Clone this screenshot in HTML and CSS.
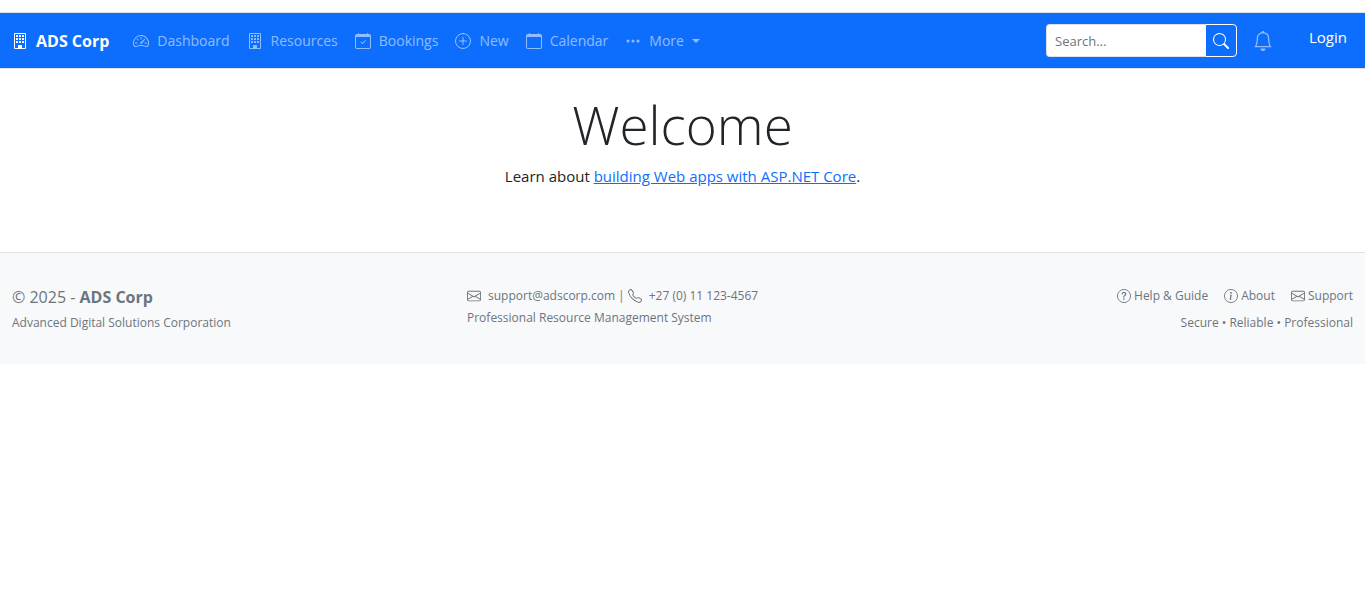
FILE: index.html
```html
<!DOCTYPE html>
<html lang="en">
<head>
<meta charset="utf-8">
<meta name="viewport" content="width=device-width, initial-scale=1">
<title>Home - ADS Corp</title>
<link rel="stylesheet" href="styles.css">
</head>
<body>
<svg class="sprite" aria-hidden="true">
  <symbol id="building" viewBox="0 0 16 16"><path d="M4 2.500a.5.5 0 0 1 .5-.5h1a.5.5 0 0 1 .5.5v1a.5.5 0 0 1-.5.5h-1a.5.5 0 0 1-.5-.5zm3 0a.5.5 0 0 1 .5-.5h1a.5.5 0 0 1 .5.5v1a.5.5 0 0 1-.5.5h-1a.5.5 0 0 1-.5-.5zm3 0a.5.5 0 0 1 .5-.5h1a.5.5 0 0 1 .5.5v1a.5.5 0 0 1-.5.5h-1a.5.5 0 0 1-.5-.5zm-6 3a.5.5 0 0 1 .5-.5h1a.5.5 0 0 1 .5.5v1a.5.5 0 0 1-.5.5h-1a.5.5 0 0 1-.5-.5zm3 0a.5.5 0 0 1 .5-.5h1a.5.5 0 0 1 .5.5v1a.5.5 0 0 1-.5.5h-1a.5.5 0 0 1-.5-.5zm3 0a.5.5 0 0 1 .5-.5h1a.5.5 0 0 1 .5.5v1a.5.5 0 0 1-.5.5h-1a.5.5 0 0 1-.5-.5zm-6 3a.5.5 0 0 1 .5-.5h1a.5.5 0 0 1 .5.5v1a.5.5 0 0 1-.5.5h-1a.5.5 0 0 1-.5-.5zm3 0a.5.5 0 0 1 .5-.5h1a.5.5 0 0 1 .5.5v1a.5.5 0 0 1-.5.5h-1a.5.5 0 0 1-.5-.5zm3 0a.5.5 0 0 1 .5-.5h1a.5.5 0 0 1 .5.5v1a.5.5 0 0 1-.5.5h-1a.5.5 0 0 1-.5-.5z"/><path fill-rule="evenodd" d="M2 1a1 1 0 0 1 1-1h10a1 1 0 0 1 1 1v14a1 1 0 0 1-1 1H3a1 1 0 0 1-1-1zm11 0H3v14h3v-2.500a.5.5 0 0 1 .5-.5h3a.5.5 0 0 1 .5.5V15h3z"/></symbol>
  <symbol id="speed" viewBox="0 0 16 16"><path d="M8 4a.5.5 0 0 1 .5.5V6a.5.5 0 0 1-1 0V4.5A.5.5 0 0 1 8 4M3.732 5.732a.5.5 0 0 1 .707 0l.915.914a.5.5 0 1 1-.708.708l-.914-.915a.5.5 0 0 1 0-.707M2 10a.5.5 0 0 1 .5-.5h1.586a.5.5 0 0 1 0 1H2.5A.5.5 0 0 1 2 10m9.5 0a.5.5 0 0 1 .5-.5h1.5a.5.5 0 0 1 0 1H12a.5.5 0 0 1-.5-.5m.754-4.246a.39.39 0 0 0-.527-.02L7.547 9.31a.91.91 0 1 0 1.302 1.258l3.434-4.297a.39.39 0 0 0-.029-.518z"/><path fill-rule="evenodd" d="M0 10a8 8 0 1 1 15.547 2.661c-.442 1.253-1.845 1.602-2.932 1.25C11.309 13.488 9.475 13 8 13c-1.474 0-3.31.488-4.615.911-1.087.352-2.49.003-2.932-1.25A8 8 0 0 1 0 10m8-7a7 7 0 0 0-6.603 9.329c.203.575.923.876 1.68.63C4.397 12.533 6.358 12 8 12s3.604.532 4.923.96c.757.245 1.477-.056 1.68-.631A7 7 0 0 0 8 3"/></symbol>
  <symbol id="calendar" viewBox="0 0 16 16"><path d="M3.5 0a.5.5 0 0 1 .5.5V1h8V.5a.5.5 0 0 1 1 0V1h1a2 2 0 0 1 2 2v11a2 2 0 0 1-2 2H2a2 2 0 0 1-2-2V3a2 2 0 0 1 2-2h1V.5a.5.5 0 0 1 .5-.5M1 4v10a1 1 0 0 0 1 1h12a1 1 0 0 0 1-1V4z"/></symbol>
  <symbol id="calendar-check" viewBox="0 0 16 16"><use href="#calendar"/><path d="M10.854 7.146a.5.5 0 0 1 0 .708l-3 3a.5.5 0 0 1-.708 0l-1.5-1.5a.5.5 0 1 1 .708-.708L7.5 9.793l2.646-2.647a.5.5 0 0 1 .708 0"/></symbol>
  <symbol id="plus" viewBox="0 0 16 16"><path fill="none" stroke="currentColor" stroke-linecap="round" d="M8 4.500v7M4.500 8h7M8 .5a7.500 7.500 0 1 0 0 15a7.500 7.500 0 1 0 0-15"/></symbol>
  <symbol id="dots" viewBox="0 0 16 16"><circle cx="3" cy="8" r="1.500"/><circle cx="8" cy="8" r="1.500"/><circle cx="13" cy="8" r="1.500"/></symbol>
  <symbol id="search" viewBox="0 0 16 16"><path d="M11.742 10.344a6.5 6.5 0 1 0-1.397 1.398h-.001q.044.06.098.115l3.85 3.85a1 1 0 0 0 1.415-1.414l-3.85-3.85a1 1 0 0 0-.115-.1zM12 6.5a5.5 5.5 0 1 1-11 0 5.5 5.5 0 0 1 11 0"/></symbol>
  <symbol id="bell" viewBox="0 0 16 16"><path d="M8 16a2 2 0 0 0 2-2H6a2 2 0 0 0 2 2M8 1.918l-.797.161A4 4 0 0 0 4 6c0 .628-.134 2.197-.459 3.742-.16.767-.376 1.566-.663 2.258h10.244c-.287-.692-.502-1.49-.663-2.258C12.134 8.197 12 6.628 12 6a4 4 0 0 0-3.203-3.92zM14.22 12c.223.447.481.801.78 1H1c.299-.199.557-.553.78-1C2.68 10.2 3 6.88 3 6c0-2.42 1.72-4.44 4.005-4.901a1 1 0 1 1 1.99 0A5 5 0 0 1 13 6c0 .88.32 4.2 1.22 6"/></symbol>
  <symbol id="mail" viewBox="0 0 16 16"><path d="M0 4a2 2 0 0 1 2-2h12a2 2 0 0 1 2 2v8a2 2 0 0 1-2 2H2a2 2 0 0 1-2-2zm2-1a1 1 0 0 0-1 1v.217l7 4.2 7-4.2V4a1 1 0 0 0-1-1zm13 2.383-4.708 2.825L15 11.105zm-.034 6.876-5.64-3.471L8 9.583l-1.326-.795-5.64 3.47A1 1 0 0 0 2 13h12a1 1 0 0 0 .966-.741M1 11.105l4.708-2.897L1 5.383z"/></symbol>
  <symbol id="phone" viewBox="0 0 16 16"><path d="M3.654 1.328a.678.678 0 0 0-1.015-.063L1.605 2.3c-.483.484-.661 1.169-.45 1.77a17.6 17.6 0 0 0 4.168 6.608 17.6 17.6 0 0 0 6.608 4.168c.601.211 1.286.033 1.77-.45l1.034-1.034a.678.678 0 0 0-.063-1.015l-2.307-1.794a.68.68 0 0 0-.58-.122l-2.19.547a1.75 1.75 0 0 1-1.657-.459L5.482 8.062a1.75 1.75 0 0 1-.46-1.657l.548-2.19a.68.68 0 0 0-.122-.58zM1.884.511a1.745 1.745 0 0 1 2.612.163L6.29 2.98c.329.423.445.974.315 1.494l-.547 2.19a.68.68 0 0 0 .178.643l2.457 2.457a.68.68 0 0 0 .644.178l2.189-.547a1.75 1.75 0 0 1 1.494.315l2.306 1.794c.829.645.905 1.87.163 2.611l-1.034 1.034c-.74.74-1.846 1.065-2.877.702a18.6 18.6 0 0 1-7.01-4.42 18.6 18.6 0 0 1-4.42-7.009c-.362-1.03-.037-2.137.703-2.877z"/></symbol>
  <symbol id="question" viewBox="0 0 16 16"><circle cx="8" cy="8" r="7.500" fill="none" stroke="currentColor"/><path d="M5.255 5.786a.237.237 0 0 0 .241.247h.825c.138 0 .248-.113.266-.25.09-.656.54-1.134 1.342-1.134.686 0 1.314.343 1.314 1.168 0 .635-.374.927-.965 1.371-.673.489-1.206 1.06-1.168 1.987l.003.217a.25.25 0 0 0 .25.246h.811a.25.25 0 0 0 .25-.25v-.105c0-.718.273-.927 1.01-1.486.609-.463 1.244-.977 1.244-2.056 0-1.511-1.276-2.241-2.673-2.241-1.267 0-2.655.59-2.75 2.286m1.557 5.763c0 .533.425.927 1.01.927.609 0 1.028-.394 1.028-.927 0-.552-.42-.94-1.029-.94-.584 0-1.009.388-1.009.94"/></symbol>
  <symbol id="info" viewBox="0 0 16 16"><circle cx="8" cy="8" r="7.500" fill="none" stroke="currentColor"/><path d="m8.93 6.588-2.29.287-.082.38.45.083c.294.07.352.176.288.469l-.738 3.468c-.194.897.105 1.319.808 1.319.545 0 1.178-.252 1.465-.598l.088-.416c-.2.176-.492.246-.686.246-.275 0-.375-.193-.304-.533zM9 4.5a1 1 0 1 1-2 0 1 1 0 0 1 2 0"/></symbol>
</svg>

<header class="topbar">
  <a class="brand" href="#"><svg class="icon"><use href="#building"/></svg>ADS Corp</a>
  <nav class="nav" aria-label="Main">
    <a class="nav-link" href="#"><svg class="icon"><use href="#speed"/></svg>Dashboard</a>
    <a class="nav-link" href="#"><svg class="icon"><use href="#building"/></svg>Resources</a>
    <a class="nav-link" href="#"><svg class="icon"><use href="#calendar-check"/></svg>Bookings</a>
    <a class="nav-link" href="#"><svg class="icon"><use href="#plus"/></svg>New</a>
    <a class="nav-link" href="#"><svg class="icon"><use href="#calendar"/></svg>Calendar</a>
    <button class="nav-link" type="button" aria-haspopup="true"><svg class="icon"><use href="#dots"/></svg>More<span class="caret"></span></button>
  </nav>
  <form class="search" role="search">
    <input class="search-input" type="search" placeholder="Search..." aria-label="Search">
    <button class="search-button" type="button" aria-label="Submit search"><svg class="icon"><use href="#search"/></svg></button>
  </form>
  <button class="bell" type="button" aria-label="Notifications"><svg class="icon icon-large"><use href="#bell"/></svg></button>
  <a class="login" href="#">Login</a>
</header>

<main class="main">
  <h1 class="title">Welcome</h1>
  <p class="lead">Learn about <a class="link" href="#">building Web apps with ASP.NET Core</a>.</p>
</main>

<footer class="footer">
  <div class="company">
    <p class="copyright">© 2025 - <strong>ADS Corp</strong></p>
    <p>Advanced Digital Solutions Corporation</p>
  </div>
  <div class="contact">
    <p class="row"><svg class="icon icon-small"><use href="#mail"/></svg><span class="mail-text">support@adscorp.com</span><span>|</span><svg class="icon icon-small"><use href="#phone"/></svg><span class="phone-text">+27 (0) 11 123-4567</span></p>
    <p>Professional Resource Management System</p>
  </div>
  <div class="links">
    <div class="link-row">
      <a class="row" href="#"><svg class="icon icon-small"><use href="#question"/></svg>Help &amp; Guide</a>
      <a class="row" href="#"><svg class="icon icon-small"><use href="#info"/></svg>About</a>
      <a class="row" href="#"><svg class="icon icon-small"><use href="#mail"/></svg>Support</a>
    </div>
    <p>Secure • Reliable • Professional</p>
  </div>
</footer>
</body>
</html>
```

FILE: styles.css
```css
* { box-sizing: border-box; }
body {
  margin: 0;
  padding-top: 12px;
  background: #fff;
  color: #212529;
  font-family: "Open Sans", "Noto Sans", sans-serif;
  font-size: 15px;
  line-height: 24px;
}
p, h1 { margin: 0; }
button { background: none; border: 0; padding: 0; font: inherit; color: inherit; cursor: pointer; }
a { color: inherit; text-decoration: none; }
.sprite { position: absolute; width: 0; height: 0; }
.icon { width: 16px; height: 16px; flex: none; fill: currentColor; }
.icon-small { width: 14px; height: 14px; }
.icon-large { width: 20px; height: 20px; }

.topbar {
  display: flex;
  align-items: center;
  min-height: 57px;
  padding: 0 18px 0 12px;
  border-top: 1px solid #dee2e6;
  border-bottom: 1px solid #dee2e6;
  background: #0d6efd;
  color: #fff;
  font-size: 14px;
}
.brand { display: flex; align-items: center; gap: 8px; margin-right: 16px; font-size: 16px; font-weight: 700; }
.nav { display: flex; flex: 1; gap: 1px; }
.nav-link { display: flex; align-items: center; gap: 8px; padding: 8px; color: rgba(255, 255, 255, 0.55); white-space: nowrap; }
.caret { border: 4px solid transparent; border-top-color: currentColor; border-bottom: 0; }
.search { display: flex; width: 191px; height: 33px; }
.search-input {
  flex: 1;
  min-width: 0;
  padding: 0 8px;
  border: 1px solid #dee2e6;
  border-right: 0;
  border-radius: 4px 0 0 4px;
  background: #fff;
  font: 13px "Open Sans", "Noto Sans", sans-serif;
}
.search-input::placeholder { color: #6c757d; opacity: 1; }
.search-button { display: grid; place-items: center; width: 32px; border: 1px solid #fff; border-radius: 0 4px 4px 0; }
.bell { display: flex; margin: 0 36px 0 16px; color: rgba(255, 255, 255, 0.55); }
.login { padding-bottom: 8px; font-size: 15px; }

.main { padding: 24px 12px 64px; text-align: center; }
.title { margin-bottom: 8px; font-size: 53px; font-weight: 300; line-height: 63px; }
.link { color: #0d6efd; text-decoration: underline; }

.footer {
  display: grid;
  grid-template-columns: repeat(3, 1fr);
  gap: 24px;
  padding: 32px 12px 30px;
  border-top: 1px solid #dee2e6;
  background: #f8f9fa;
  color: #6c757d;
  font-size: 12px;
  line-height: 22px;
}
.company { display: flex; flex-direction: column; gap: 3px; }
.copyright { font-size: 16px; line-height: 24px; }
.row { display: flex; align-items: center; gap: 3px; }
.mail-text, .phone-text { padding-left: 4px; }
.links { display: flex; flex-direction: column; align-items: flex-end; gap: 5px; }
.link-row { display: flex; gap: 16px; }
```
